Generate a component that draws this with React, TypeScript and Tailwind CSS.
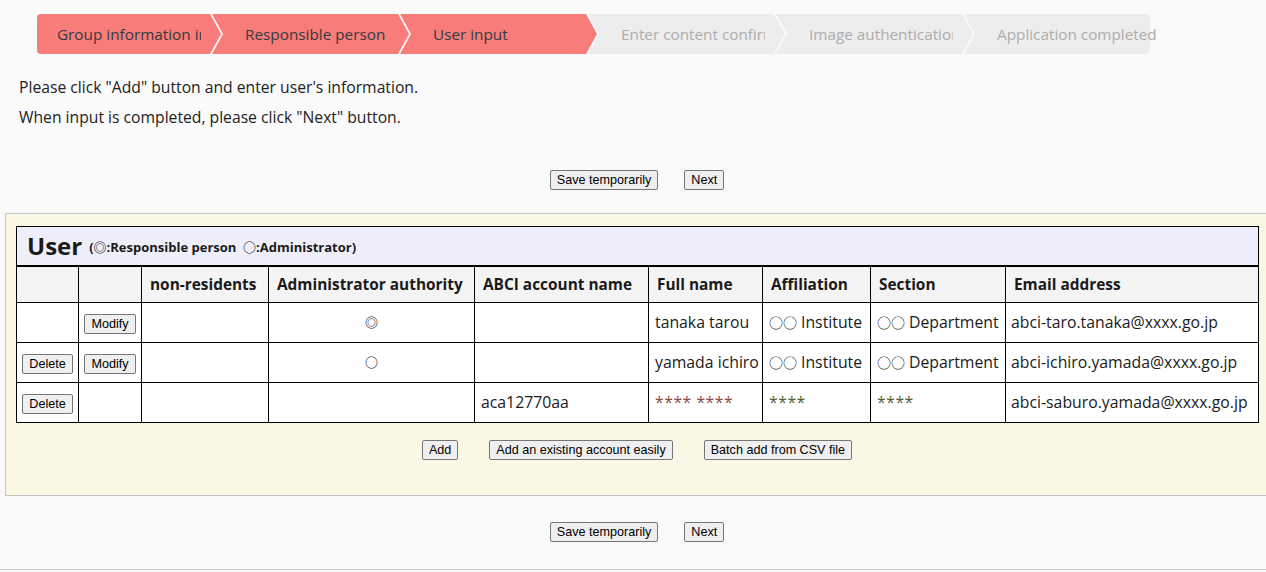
import React from "react";

const steps = [
  "Group information input",
  "Responsible person",
  "User input",
  "Enter content confirmation",
  "Image authentication",
  "Application completed",
];

const users = [
  {
    del: false,
    modify: true,
    admin: "◎",
    account: "",
    name: "tanaka tarou",
    affiliation: "Institute",
    section: "Department",
    email: "abci-taro.tanaka@xxxx.go.jp",
  },
  {
    del: true,
    modify: true,
    admin: "○",
    account: "",
    name: "yamada ichiro",
    affiliation: "Institute",
    section: "Department",
    email: "abci-ichiro.yamada@xxxx.go.jp",
  },
  {
    del: true,
    modify: false,
    admin: "",
    account: "aca12770aa",
    name: "**** ****",
    affiliation: "****",
    section: "****",
    email: "abci-saburo.yamada@xxxx.go.jp",
    masked: true,
  },
];

const Btn: React.FC<{ children: React.ReactNode }> = ({ children }) => (
  <button
    type="button"
    className="font-['Liberation_Sans',Arial,sans-serif] text-[12.6px] leading-[16px] px-[6px] py-[1px] border border-[#767676] rounded-[2px] bg-[#efefef] text-black whitespace-nowrap"
  >
    {children}
  </button>
);

const StepBar: React.FC = () => {
  const current = 2;
  return (
    <div className="flex h-[40px] ml-[37px] mt-[14px] w-[1113px]">
      {steps.map((label, i) => {
        const active = i <= current;
        const first = i === 0;
        const last = i === steps.length - 1;
        let shape =
          "[clip-path:polygon(0_0,calc(100%-11px)_0,100%_50%,calc(100%-11px)_100%,0_100%,11px_50%)]";
        if (first)
          shape =
            "[clip-path:polygon(0_0,calc(100%-11px)_0,100%_50%,calc(100%-11px)_100%,0_100%)] rounded-l-[4px]";
        if (last)
          shape =
            "[clip-path:polygon(0_0,100%_0,100%_100%,0_100%,11px_50%)] rounded-r-[4px]";
        return (
          <div
            key={label}
            className={`relative h-full shrink-0 ${
              first ? "w-[184px]" : last ? "w-[186px] -ml-[9px]" : "w-[197px] -ml-[9px]"
            }`}
          >
            <div
              className={`absolute inset-0 ${shape} ${
                active ? "bg-[#f87c78]" : "bg-[#ededed]"
              }`}
            />
            <div
              className={`relative h-full flex items-center text-[15.3px] ${
                first ? "pl-[20px]" : "pl-[33px]"
              } ${last ? "" : "pr-[20px]"} ${
                active ? "text-[#333a44]" : "text-[#acacac]"
              }`}
            >
              {/* long labels are cut at the step edge, as on the live page */}
              <span
                className={`block whitespace-nowrap ${
                  last ? "overflow-visible" : "overflow-hidden"
                }`}
              >
                {label}
              </span>
            </div>
          </div>
        );
      })}
    </div>
  );
};

const Circles: React.FC = () => (
  <span className="text-[14px] mr-[4px]">○○</span>
);

const App: React.FC = () => {
  return (
    <div className="min-h-screen w-full overflow-hidden bg-[#fafafa] font-['Open_Sans','Noto_Sans_CJK_JP',sans-serif] text-[#1a1a1a]">
      <div className="w-[1274px]">
        <StepBar />

        <div className="mt-[18px] pl-[19px] text-[15.7px] text-[#222]">
          <p className="leading-[30px]">
            Please click "Add" button and enter user's information.
          </p>
          <p className="leading-[30px]">
            When input is completed, please click "Next" button.
          </p>
        </div>

        <div className="flex justify-center gap-[26px] mt-[38px]">
          <Btn>Save temporarily</Btn>
          <Btn>Next</Btn>
        </div>

        <div className="mt-[23px] mx-[5px] border border-[#c4c4c4] bg-[#faf8e4] px-[10px] pt-[12px] pb-[35px]">
          <table className="w-[1242px] border-collapse table-fixed text-[15.8px]">
            <colgroup>
              <col className="w-[62px]" />
              <col className="w-[63px]" />
              <col className="w-[127px]" />
              <col className="w-[206px]" />
              <col className="w-[174px]" />
              <col className="w-[114px]" />
              <col className="w-[108px]" />
              <col className="w-[135px]" />
              <col className="w-[253px]" />
            </colgroup>
            <thead>
              <tr>
                <th
                  colSpan={9}
                  className="h-[39px] border border-black border-b-2 bg-[#efeffb] text-left pl-[10px] font-normal"
                >
                  <span className="text-[24px] font-bold align-middle">User</span>
                  <span className="text-[13px] font-bold align-middle ml-[7px] relative top-[2px]">
                    (◎:Responsible person&nbsp;&nbsp;○:Administrator)
                  </span>
                </th>
              </tr>
              <tr className="bg-[#f4f4f4]">
                {[
                  "",
                  "",
                  "non-residents",
                  "Administrator authority",
                  "ABCI account name",
                  "Full name",
                  "Affiliation",
                  "Section",
                  "Email address",
                ].map((h, i) => (
                  <th
                    key={i}
                    className="h-[37px] border border-black text-left px-[8px] text-[15.4px] font-bold whitespace-nowrap"
                  >
                    {h}
                  </th>
                ))}
              </tr>
            </thead>
            <tbody className="bg-white">
              {users.map((u) => (
                <tr key={u.email}>
                  <td className="h-[40px] border border-black text-center">
                    {u.del && <Btn>Delete</Btn>}
                  </td>
                  <td className="border border-black text-center">
                    {u.modify && <Btn>Modify</Btn>}
                  </td>
                  <td className="border border-black" />
                  <td className="border border-black text-center text-[13px] font-bold">
                    {u.admin}
                  </td>
                  <td className="border border-black px-[6px]">{u.account}</td>
                  <td
                    className={`border border-black px-[6px] whitespace-nowrap ${
                      u.masked ? "text-[#8b4a3c] tracking-[0.5px]" : ""
                    }`}
                  >
                    {u.name}
                  </td>
                  <td
                    className={`border border-black px-[6px] whitespace-nowrap ${
                      u.masked ? "text-[#4f5e34] tracking-[0.5px]" : ""
                    }`}
                  >
                    {!u.masked && <Circles />}
                    {u.affiliation}
                  </td>
                  <td
                    className={`border border-black px-[6px] whitespace-nowrap ${
                      u.masked ? "text-[#4f5e34] tracking-[0.5px]" : ""
                    }`}
                  >
                    {!u.masked && <Circles />}
                    {u.section}
                  </td>
                  <td className="border border-black px-[5px] whitespace-nowrap">
                    {u.email}
                  </td>
                </tr>
              ))}
            </tbody>
          </table>

          <div className="flex justify-center gap-[31px] mt-[17px]">
            <Btn>Add</Btn>
            <Btn>Add an existing account easily</Btn>
            <Btn>Batch add from CSV file</Btn>
          </div>
        </div>

        <div className="flex justify-center gap-[26px] mt-[26px]">
          <Btn>Save temporarily</Btn>
          <Btn>Next</Btn>
        </div>
      </div>
      <div className="mt-[27px] border-t border-[#c4c4c4] h-[4px]" />
    </div>
  );
};

export default App;
